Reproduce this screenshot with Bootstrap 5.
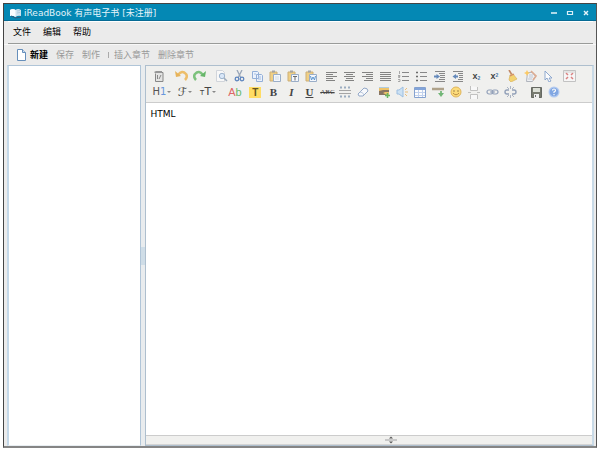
<!DOCTYPE html>
<html lang="zh-CN">
<head>
<meta charset="utf-8">
<meta name="viewport" content="width=device-width, initial-scale=1">
<title>iReadBook 有声电子书</title>
<link href="https://cdn.jsdelivr.net/npm/bootstrap@5.3.0/dist/css/bootstrap.min.css" rel="stylesheet">
<style>
body{font:9px/14px "DejaVu Sans","Noto Sans CJK SC",sans-serif;color:#000;background:#fff}
button{border:0;background:none;padding:0;color:inherit;white-space:nowrap}
svg{display:block;flex:none}
.shell{padding:3px}
.win{border:1px solid #444;border-right:1px solid #555;border-bottom:2px solid #858585;background:#ebebeb}
.titlebar{height:17px;background:#0488b4;border-bottom:1px solid #066a94;color:#e4f4fa;padding:2px 6px 0 5px;gap:2px}
.titlebar h1{font-size:9px;line-height:14px}
.menubar{height:23px;border-top:1px solid #fff;margin:0 3px 0 4px;padding:0 5px 2px;gap:12px;border-bottom:1px solid #999b99}
.actions{height:21px;padding:0 12px;gap:8px;color:#999;border-top:1px solid #f8f8f8}
.actions .new{color:#000;font-weight:700;gap:3px}
.actions i{width:1px;height:6px;background:#aaa;margin-right:-3px}
.work{margin:0 2px 0 3px;min-height:0}
.side{flex:0 0 22.9%;background:#fff;border:1px solid #b0c5d8;border-left:2px solid #c4d8e8;border-bottom-color:#e8eef2}
.split{width:4px;background:#e9ecee;cursor:col-resize}
.split span{width:4px;height:18px;background:#cfdde7}
.editor{border:1px solid #aebfce;border-right:2px solid #c9dae7;min-width:0;background:#fff}
.tools{background:#f0f0ee;border-bottom:1px solid #ccc;padding:2px 4px 2px;height:37px}
.tools .line{height:16px}
.tools button{width:18px;height:16px;display:flex;align-items:center;justify-content:center;color:#444;flex:none}
.tools svg{opacity:.85}
.tools .g{display:flex;margin-right:4px}
.tools .near{margin-right:3px}
.tools .w{width:23px}
.drop::after{content:"";border:2px solid transparent;border-top:2px solid #888;margin:2px 0 0 1px}
.tools .hd{font-size:10px;color:#555}.hd b{font-weight:400;color:#6796dc}
.serif{font:bold 11px/14px "Liberation Serif",serif}
.script{font:12px/14px "DejaVu Sans",serif}
.size{font-size:11px}.size small{font-size:8px}
.abc{font:7px/12px "Liberation Serif",serif;text-decoration:line-through}
.sc{font:bold 9px/12px "Liberation Sans",sans-serif}
.sc sub,.sc sup{font-size:5px;color:#4878a8}
.tools .ab{font:11px/14px "Liberation Sans",sans-serif;color:#d66}.ab b{font-weight:400;color:#69b96b}
.hl{background:#ffdc64;padding:0 3px;font:bold 10px/11px "Liberation Sans",sans-serif;color:#655520}
.page{border:0;resize:none;outline:0;padding:4px;line-height:14px;width:100%;min-height:0}
.grip{height:10px;background:#f0f0ee;border-top:1px solid #ccc;border-bottom:1px solid #d4d4d4;padding-left:10%}
</style>
<script src="https://cdn.jsdelivr.net/npm/bootstrap@5.3.0/dist/js/bootstrap.bundle.min.js" defer></script>
</head>
<body>
<svg class="d-none" aria-hidden="true">
<symbol id="clip" viewBox="0 0 12 12"><path d="M1 2h7v9H1z" fill="#f0ca72" stroke="#c6a565"/><path d="M3 .5h3v2H3z" fill="#999"/><path d="M4.500 4.500h7v7h-7z" fill="#f5f9ff" stroke="#8ca3c2"/></symbol>
</svg>
<div class="shell vh-100 d-flex"><div class="win flex-grow-1 d-flex flex-column overflow-hidden">
<header class="titlebar d-flex align-items-center flex-shrink-0">
<svg width="13" height="12" viewBox="0 0 13 12"><path d="M1 3q3-2 5.500 0Q9 1 12 3v6q-3-1-5.500 1Q4 8 1 9z" fill="#cfe3ef"/><path d="M1 3q3-2 5.500 0v7Q4 8 1 9z" fill="#f9fcff"/><path d="M2 9l4.500 2L12 10" fill="none" stroke="#315878"/><path d="M8 4l3-.5M8 6l3-.5" stroke="#9cbfd5" stroke-width=".7"/></svg>
<h1 class="m-0 fw-normal flex-grow-1">iReadBook 有声电子书 [未注册]</h1>
<div class="d-flex align-items-center gap-2">
<button aria-label="最小化"><svg width="8" height="8"><path d="M1 4h6" stroke="#e5f4fa" stroke-width="1.500"/></svg></button>
<button aria-label="最大化"><svg width="8" height="8"><path d="M1.500 2.500h5v3h-5z" fill="none" stroke="#d9eff8" stroke-width="1.200"/></svg></button>
<button aria-label="关闭"><svg width="8" height="8"><path d="M2 2l4 4M6 2l-4 4" stroke="#e5f4fa" stroke-width="1.400"/></svg></button>
</div></header>
<nav class="menubar d-flex align-items-center flex-shrink-0"><button>文件</button><button>编辑</button><button>帮助</button></nav>
<div class="actions d-flex align-items-center flex-shrink-0">
<button class="new d-flex align-items-center"><svg width="11" height="12" viewBox="0 0 11 12"><path d="M1.500.5h5l3 3v8h-8z" fill="#fff" stroke="#668fbb"/><path d="M6.500.5v3h3" fill="#cfe0f3" stroke="#668fbb"/></svg>新建</button>
<button>保存</button><button>制作</button><i></i><button>插入章节</button><button>删除章节</button>
</div>
<main class="work d-flex flex-grow-1">
<aside class="side"></aside>
<div class="split d-flex align-items-center"><span></span></div>
<section class="editor d-flex flex-column flex-grow-1">
<div class="tools flex-shrink-0">
<div class="line d-flex">
<div class="g"><button aria-label="源代码"><svg width="12" height="12"><path d="M3 2.500h7v9H2.500v-8" fill="#e2e2e2" stroke="#777"/><path d="M1 2l2-1h6v2H2z" fill="#888"/><path d="M4.500 5v4M8 5l-2 4" stroke="#777"/></svg></button></div>
<div class="g"><button aria-label="撤销"><svg width="13" height="12"><path d="M3 5Q7-.5 11 4q2 3-1 6" fill="none" stroke="#edb653" stroke-width="2.500"/><path d="M0 1l1 6 5-1z" fill="#e6a941"/></svg></button><button aria-label="重做"><svg width="13" height="12"><path d="M10 5Q6-.5 2 4q-2 3 1 6" fill="none" stroke="#68ba69" stroke-width="2.500"/><path d="M13 1l-1 6-5-1z" fill="#4eac52"/></svg></button></div>
<div class="g near">
<button aria-label="预览"><svg width="13" height="12"><path d="M1.500.5h6l2 2v9h-8z" fill="#fafafa" stroke="#ccd1d8"/><circle cx="7" cy="6" r="2.700" fill="#d5e6fa" stroke="#91abc9"/><path d="M9 8l3 3" stroke="#91a2b5" stroke-width="1.500"/></svg></button>
<button aria-label="剪切"><svg width="11" height="12"><path d="M3 0l4 8M8 0L4 8" stroke="#8c9bb0" stroke-width="1.300"/><circle cx="3" cy="9" r="1.800" fill="none" stroke="#4775b8" stroke-width="1.300"/><circle cx="8" cy="9" r="1.800" fill="none" stroke="#4775b8" stroke-width="1.300"/></svg></button>
<button aria-label="复制"><svg width="13" height="12"><path d="M1.500 1.500h5l1 1v6h-6zM5.500 4.500h5l1 1v6h-6z" fill="#eaf2ff" stroke="#83a4d5"/><path d="M3 4h2M7 7h3M7 9h3" stroke="#9bb6df"/></svg></button>
<button aria-label="粘贴"><svg width="12" height="12"><use href="#clip"/><path d="M6 7h4M6 9h4" stroke="#cdd8e5"/></svg></button>
<button aria-label="粘贴为文本"><svg width="12" height="12"><use href="#clip"/><path d="M6 6.500h4M8 6.500v4" stroke="#555"/></svg></button>
<button aria-label="从 Word 粘贴"><svg width="12" height="12"><use href="#clip"/><path d="M5.500 6l1 4L8 7l1.500 3 1-4" fill="none" stroke="#4386cb"/></svg></button>
</div>
<div class="g near">
<button aria-label="左对齐"><svg width="12" height="10"><path d="M0 1.500h11M0 3.500h7M0 5.500h11M0 7.500h7M0 9.500h9" stroke="#707070"/></svg></button>
<button aria-label="居中"><svg width="12" height="10"><path d="M0 1.500h11M2 3.500h7M0 5.500h11M2 7.500h7M1 9.500h9" stroke="#707070"/></svg></button>
<button aria-label="右对齐"><svg width="12" height="10"><path d="M0 1.500h11M4 3.500h7M0 5.500h11M4 7.500h7M2 9.500h9" stroke="#707070"/></svg></button>
<button aria-label="两端对齐"><svg width="12" height="10"><path d="M0 1.500h11M0 3.500h11M0 5.500h11M0 7.500h11M0 9.500h11" stroke="#707070"/></svg></button>
<button aria-label="编号"><svg width="12" height="11"><path d="M4 1.500h7M4 5.500h7M4 9.500h7" stroke="#777"/><path d="M1.500 0v3M0 4.500h2v1H.5v1H2M0 8.500h2v2H0" fill="none" stroke="#888" stroke-width=".8"/></svg></button>
<button aria-label="项目符号"><svg width="12" height="11"><path d="M4 1.500h7M4 5.500h7M4 9.500h7" stroke="#777"/><path d="M0 1.500h2M0 5.500h2M0 9.500h2" stroke="#555" stroke-width="1.500"/></svg></button>
<button aria-label="增加缩进"><svg width="12" height="11"><path d="M1 .5h10M5 2.500h6M6 4.500h5M6 6.500h5M5 8.500h6M1 10.500h10" stroke="#777"/><path d="M0 5.500h3" stroke="#4c78b2" stroke-width="2"/><path d="M2.500 3v5L6 5.500z" fill="#4c78b2"/></svg></button>
<button aria-label="减少缩进"><svg width="12" height="11"><path d="M1 .5h10M6 2.500h5M7 4.500h4M7 6.500h4M6 8.500h5M1 10.500h10" stroke="#777"/><path d="M3 5.500h3" stroke="#4c78b2" stroke-width="2"/><path d="M4 3v5L.5 5.500z" fill="#4c78b2"/></svg></button>
<button aria-label="下标" class="sc"><span>x<sub>2</sub></span></button>
<button aria-label="上标" class="sc"><span>x<sup>2</sup></span></button>
<button aria-label="清理"><svg width="11" height="12"><path d="M2 0l3 5" stroke="#b97650" stroke-width="1.600"/><path d="M3 5l3-1 4 5-6 3-2-2z" fill="#f4cf59" stroke="#d7aa46" stroke-width=".7"/><path d="M3 6l4-2" stroke="#c75" stroke-width="1.200"/></svg></button>
<button aria-label="快速排版"><svg width="13" height="12"><path d="M3.500 2.500h5l3 4-3 5h-6z" fill="#eef0f4" stroke="#a6abb5"/><path d="M5 5h4M5 7h4M4 9h4" stroke="#b8c2d2"/><path d="M3 0l1 2 2 1-2 1-1 2-1-2-2-1 2-1z" fill="#ffc44d"/><path d="M7 1l5 5-3 4" fill="none" stroke="#d9a184" stroke-width="1.600"/></svg></button>
<button aria-label="全选"><svg width="11" height="12"><path d="M2 1v9l2-2 2 4 2-1-2-3h3z" fill="#fff" stroke="#7293c5" stroke-width=".9"/></svg></button>
</div>
<div class="g"><button aria-label="全屏"><svg width="13" height="12"><path d="M.5.5h12v11H.5z" fill="#f8f8f8" stroke="#bbb"/><path d="M3 3l2 2M10 3L8 5M3 9l2-2M10 9L8 7" stroke="#d76f6f" stroke-width="1.500"/><path d="M.5 2h12" stroke="#ccc"/></svg></button></div>
</div>
<div class="line d-flex">
<div class="g"><button class="w drop hd"><span>H<b>1</b></span></button><button class="w drop script" aria-label="字体">ℱ</button><button class="w drop size" aria-label="文字大小"><span><small>т</small>T</span></button></div>
<div class="g near"><button class="w ab" aria-label="文字颜色"><span>A<b>b</b></span></button><button aria-label="文字背景"><span class="hl">T</span></button><button class="serif">B</button><button class="serif fst-italic">I</button><button class="serif text-decoration-underline">U</button><button class="abc">ABC</button><button aria-label="行距"><svg width="12" height="12"><path d="M0 4.500h12M0 7.500h12" stroke="#999"/><path d="M1 1.500h11M1 10.500h11" stroke="#8da2b9" stroke-width="2" stroke-dasharray="2 2"/></svg></button><button aria-label="删除格式"><svg width="12" height="12"><path d="M1 8l6-6q4 0 4 3l-5 5H2z" fill="#f9fbff" stroke="#849cc1"/><path d="M3 6q3 0 4 3" fill="none" stroke="#b2c2db"/></svg></button></div>
<div class="g">
<button aria-label="图片"><svg width="13" height="12"><path d="M1 1h10v8H1z" fill="#efbd55"/><path d="M1 5l4-1 6 0v2L7 6 5 7l4 2H1z" fill="#76604a"/><path d="M1 1.500h10" stroke="#a7c6dd"/><path d="M9.500 7v5M7 9.500h5" stroke="#53ac49" stroke-width="1.500"/></svg></button>
<button aria-label="音频"><svg width="12" height="12"><path d="M1 4h2l4-3v10L3 8H1z" fill="#c6dff5" stroke="#8eb6df"/><path d="M9 4l2-2M9 6h3M9 8l2 2" stroke="#e9b568"/></svg></button>
<button aria-label="表格"><svg width="12" height="11"><path d="M.5.5h11v10H.5z" fill="#fff" stroke="#7294ca"/><path d="M1 2h10" stroke="#6f97d6" stroke-width="2"/><path d="M1 5.500h10M1 8.500h10M4.500 3v7M8.500 3v7" stroke="#b9cced"/></svg></button>
<button aria-label="插入横线"><svg width="13" height="12"><path d="M0 3h12" stroke="#a49579" stroke-width="2.500"/><path d="M9 5v3" stroke="#6eb573" stroke-width="2"/><path d="M6 7h6l-3 4z" fill="#5cad63"/></svg></button>
<button aria-label="表情"><svg width="12" height="12"><circle cx="6" cy="6" r="5" fill="#ffd967" stroke="#deab43"/><circle cx="4" cy="5" r=".8" fill="#85652b"/><circle cx="8" cy="5" r=".8" fill="#85652b"/><path d="M3 7q3 3.500 6 0" fill="none" stroke="#b37d2a"/></svg></button>
<button aria-label="分页"><svg width="12" height="13"><path d="M2.500 0v4.500h7V1M2.500 13V8.500h7V13" fill="#fafafa" stroke="#b9b9b9"/><path d="M0 6.500h3M9 6.500h3" stroke="#b9b9b9"/></svg></button>
<button aria-label="链接"><svg width="13" height="8"><rect x="1" y="2" width="6" height="4" rx="2" fill="none" stroke="#8293b0" stroke-width="1.200"/><rect x="6" y="2" width="6" height="4" rx="2" fill="none" stroke="#8293b0" stroke-width="1.200"/><path d="M4 4h5" stroke="#8293b0"/></svg></button>
<button aria-label="取消链接"><svg width="13" height="12"><path d="M5 4H3q-2 0-2 2t2 2h2M8 4h2q2 0 2 2t-2 2H8" fill="none" stroke="#8293b0" stroke-width="1.400"/><path d="M6.500 0v3M3 1l2 2M10 1L8 3M6.500 9v3M3 11l2-2M10 11L8 9" stroke="#9faabc"/></svg></button>
</div>
<div class="g"><button class="ms-1" aria-label="保存内容"><svg width="11" height="11"><path d="M.5.5h10v10H.5z" fill="#62665a" stroke="#4e524b"/><path d="M2 1h7v4H2z" fill="#d8ddd2"/><path d="M3 7h5v4H3z" fill="#eee"/><path d="M4.500 8v2" stroke="#555"/></svg></button><button aria-label="帮助"><svg width="12" height="12"><circle cx="6" cy="6" r="5.500" fill="#a9c5f2"/><circle cx="6" cy="6" r="4.300" fill="#6e9be0"/><path d="M4.500 4.500q0-1.500 1.500-1.500t1.500 1.500Q7.500 5.500 6 6v1M6 8v1.300" fill="none" stroke="#fff" stroke-width="1.200"/></svg></button></div>
</div></div>
<textarea class="page flex-grow-1" aria-label="正文" spellcheck="false">HTML</textarea>
<div class="grip d-flex align-items-center justify-content-center flex-shrink-0"><svg width="12" height="8"><path d="M0 4h12" stroke="#bbb" stroke-width="1.500"/><path d="M4 2.500L6 .5l2 2zM4 5.500l2 2 2-2z" fill="#555"/></svg></div>
</section></main>
</div></div>
</body></html>
